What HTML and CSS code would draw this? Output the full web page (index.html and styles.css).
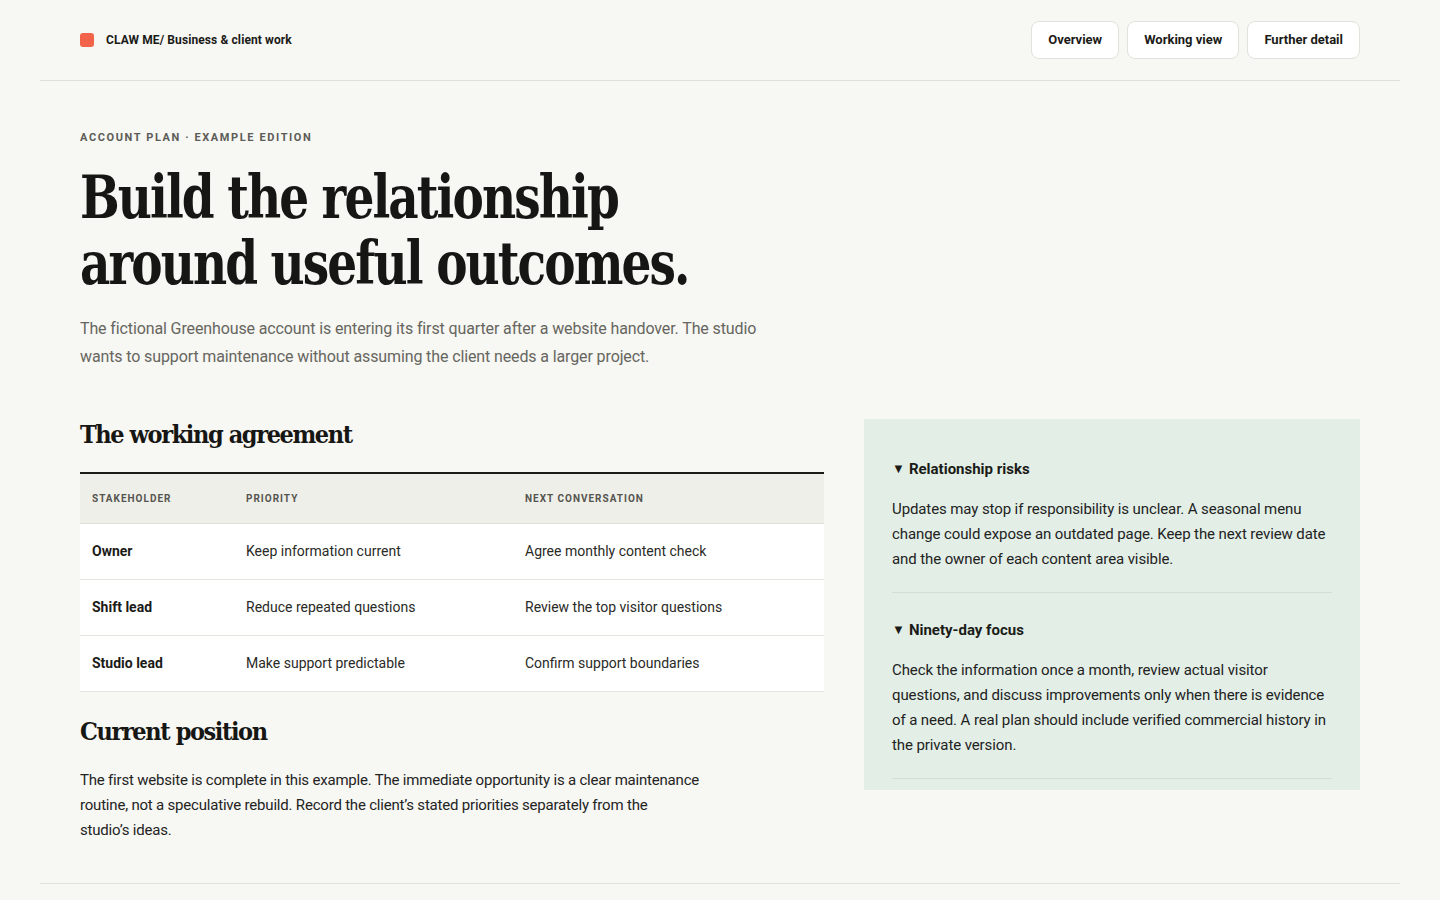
FILE: index.html
```html
<!DOCTYPE html>
<html lang="en">
<head>
    <meta charset="UTF-8">
    <meta name="viewport" content="width=device-width, initial-scale=1.0">
    <title>Account plan - Greenhouse</title>
    <link rel="stylesheet" href="styles.css">
</head>
<body>

<div class="page">
    <header class="topbar">
        <div class="brand">
            <span class="brand-mark"></span>
            <span class="brand-name">CLAW ME/ Business &amp; client work</span>
        </div>
        <nav class="nav">
            <a href="#" class="nav-btn">Overview</a>
            <a href="#" class="nav-btn">Working view</a>
            <a href="#" class="nav-btn">Further detail</a>
        </nav>
    </header>

    <section class="hero">
        <p class="eyebrow">Account plan · Example edition</p>
        <h1>Build the relationship<br>around useful outcomes.</h1>
        <p class="lead">The fictional Greenhouse account is entering its first quarter after a website handover. The studio wants to support maintenance without assuming the client needs a larger project.</p>
    </section>

    <main class="columns">
        <div class="main-col">
            <h2>The working agreement</h2>
            <table class="agreement">
                <thead>
                    <tr>
                        <th class="col-who">Stakeholder</th>
                        <th class="col-priority">Priority</th>
                        <th>Next conversation</th>
                    </tr>
                </thead>
                <tbody>
                    <tr>
                        <td class="who">Owner</td>
                        <td>Keep information current</td>
                        <td>Agree monthly content check</td>
                    </tr>
                    <tr>
                        <td class="who">Shift lead</td>
                        <td>Reduce repeated questions</td>
                        <td>Review the top visitor questions</td>
                    </tr>
                    <tr>
                        <td class="who">Studio lead</td>
                        <td>Make support predictable</td>
                        <td>Confirm support boundaries</td>
                    </tr>
                </tbody>
            </table>

            <h2 class="position-title">Current position</h2>
            <p class="position-text">The first website is complete in this example. The immediate opportunity is a clear maintenance routine, not a speculative rebuild. Record the client’s stated priorities separately from the<br>studio’s ideas.</p>
        </div>

        <aside class="side-panel">
            <details open>
                <summary>Relationship risks</summary>
                <p>Updates may stop if responsibility is unclear. A seasonal menu change could expose an outdated page. Keep the next review date and the owner of each content area visible.</p>
            </details>
            <details open>
                <summary>Ninety-day focus</summary>
                <p>Check the information once a month, review actual visitor questions, and discuss improvements only when there is evidence of a need. A real plan should include verified commercial history in the private version.</p>
            </details>
        </aside>
    </main>

    <footer class="footer"></footer>
</div>

</body>
</html>
```

FILE: styles.css
```css
* {
    box-sizing: border-box;
}
body {
    margin: 0;
    background: #f7f7f3;
    color: #1b1b18;
    font-family: Roboto, 'Liberation Sans', sans-serif;
}
.page {
    margin: 0 40px;
}
.topbar {
    display: flex;
    justify-content: space-between;
    align-items: center;
    padding: 21px 40px;
    border-bottom: 1px solid #e0e0da;
}
.brand {
    display: flex;
    align-items: center;
    gap: 12px;
}
.brand-mark {
    width: 14px;
    height: 14px;
    border-radius: 3px;
    background: #f2644a;
}
.brand-name {
    font-size: 12px;
    font-weight: 700;
    letter-spacing: 0.1px;
}
.nav {
    display: flex;
    gap: 8px;
}
.nav-btn {
    display: block;
    height: 38px;
    line-height: 36px;
    padding: 0 16px;
    background: #fff;
    border: 1px solid #e2e2dc;
    border-radius: 8px;
    color: #1b1b18;
    font-size: 13px;
    font-weight: 700;
    text-decoration: none;
}
.hero {
    padding: 49px 40px 0;
}
.eyebrow {
    margin: 0;
    font-size: 11px;
    line-height: 16px;
    font-weight: 700;
    letter-spacing: 1.6px;
    text-transform: uppercase;
    color: #5c5c57;
}
/* condensed face is still a bit wide for the headline, so squeeze it */
h1 {
    margin: 18px 0 0;
    font-family: 'DejaVu Serif', 'Liberation Serif', serif;
    font-stretch: condensed;
    font-size: 60px;
    line-height: 66px;
    font-weight: 700;
    letter-spacing: -2.2px;
    color: #161614;
    transform: scaleX(0.87);
    transform-origin: left center;
}
.lead {
    margin: 19px 0 0;
    max-width: 700px;
    font-size: 16px;
    line-height: 28px;
    color: #66665f;
    letter-spacing: -0.12px;
}
.columns {
    display: grid;
    grid-template-columns: 1.5fr 1fr;
    gap: 40px;
    align-items: start;
    padding: 0 40px 40px;
    margin-top: 48px;
    border-bottom: 1px solid #e0e0da;
}
h2 {
    margin: 0;
    font-family: 'DejaVu Serif', 'Liberation Serif', serif;
    font-stretch: condensed;
    font-size: 25px;
    line-height: 32px;
    font-weight: 700;
    letter-spacing: -1.4px;
    color: #161614;
}
.agreement {
    width: 100%;
    margin-top: 21px;
    border-collapse: collapse;
    border-top: 2px solid #1b1b18;
    font-size: 14px;
}
.agreement th {
    height: 50px;
    padding: 0 12px;
    text-align: left;
    background: #efefea;
    font-size: 10px;
    font-weight: 700;
    letter-spacing: 1px;
    text-transform: uppercase;
    color: #55554f;
    border-bottom: 1px solid #e0e0da;
}
.col-who {
    width: 154px;
}
.col-priority {
    width: 279px;
}
.agreement td {
    height: 56px;
    padding: 0 12px;
    background: #fff;
    border-bottom: 1px solid #e5e5df;
    color: #2a2a26;
}
.agreement td.who {
    font-weight: 700;
    color: #1b1b18;
}
.position-title {
    margin-top: 24px;
}
.position-text {
    margin: 20px 0 0;
    max-width: 630px;
    font-size: 15px;
    line-height: 25px;
    color: #24241f;
    letter-spacing: -0.2px;
}
.side-panel {
    background: #e3efe6;
    padding: 13px 28px 11px;
}
.side-panel details {
    padding: 26px 0 20px;
    border-bottom: 1px solid #d3ddd5;
}
.side-panel summary {
    font-size: 15px;
    line-height: 22px;
    font-weight: 700;
    cursor: pointer;
    list-style: none;
}
.side-panel summary::before {
    content: "▼";
    display: inline-block;
    font-size: 13px;
    margin-right: 4px;
    vertical-align: 1px;
}
.side-panel p {
    margin: 17px 0 0;
    font-size: 15px;
    line-height: 25px;
    color: #22221e;
    letter-spacing: -0.1px;
}
.footer {
    height: 16px;
}
```
